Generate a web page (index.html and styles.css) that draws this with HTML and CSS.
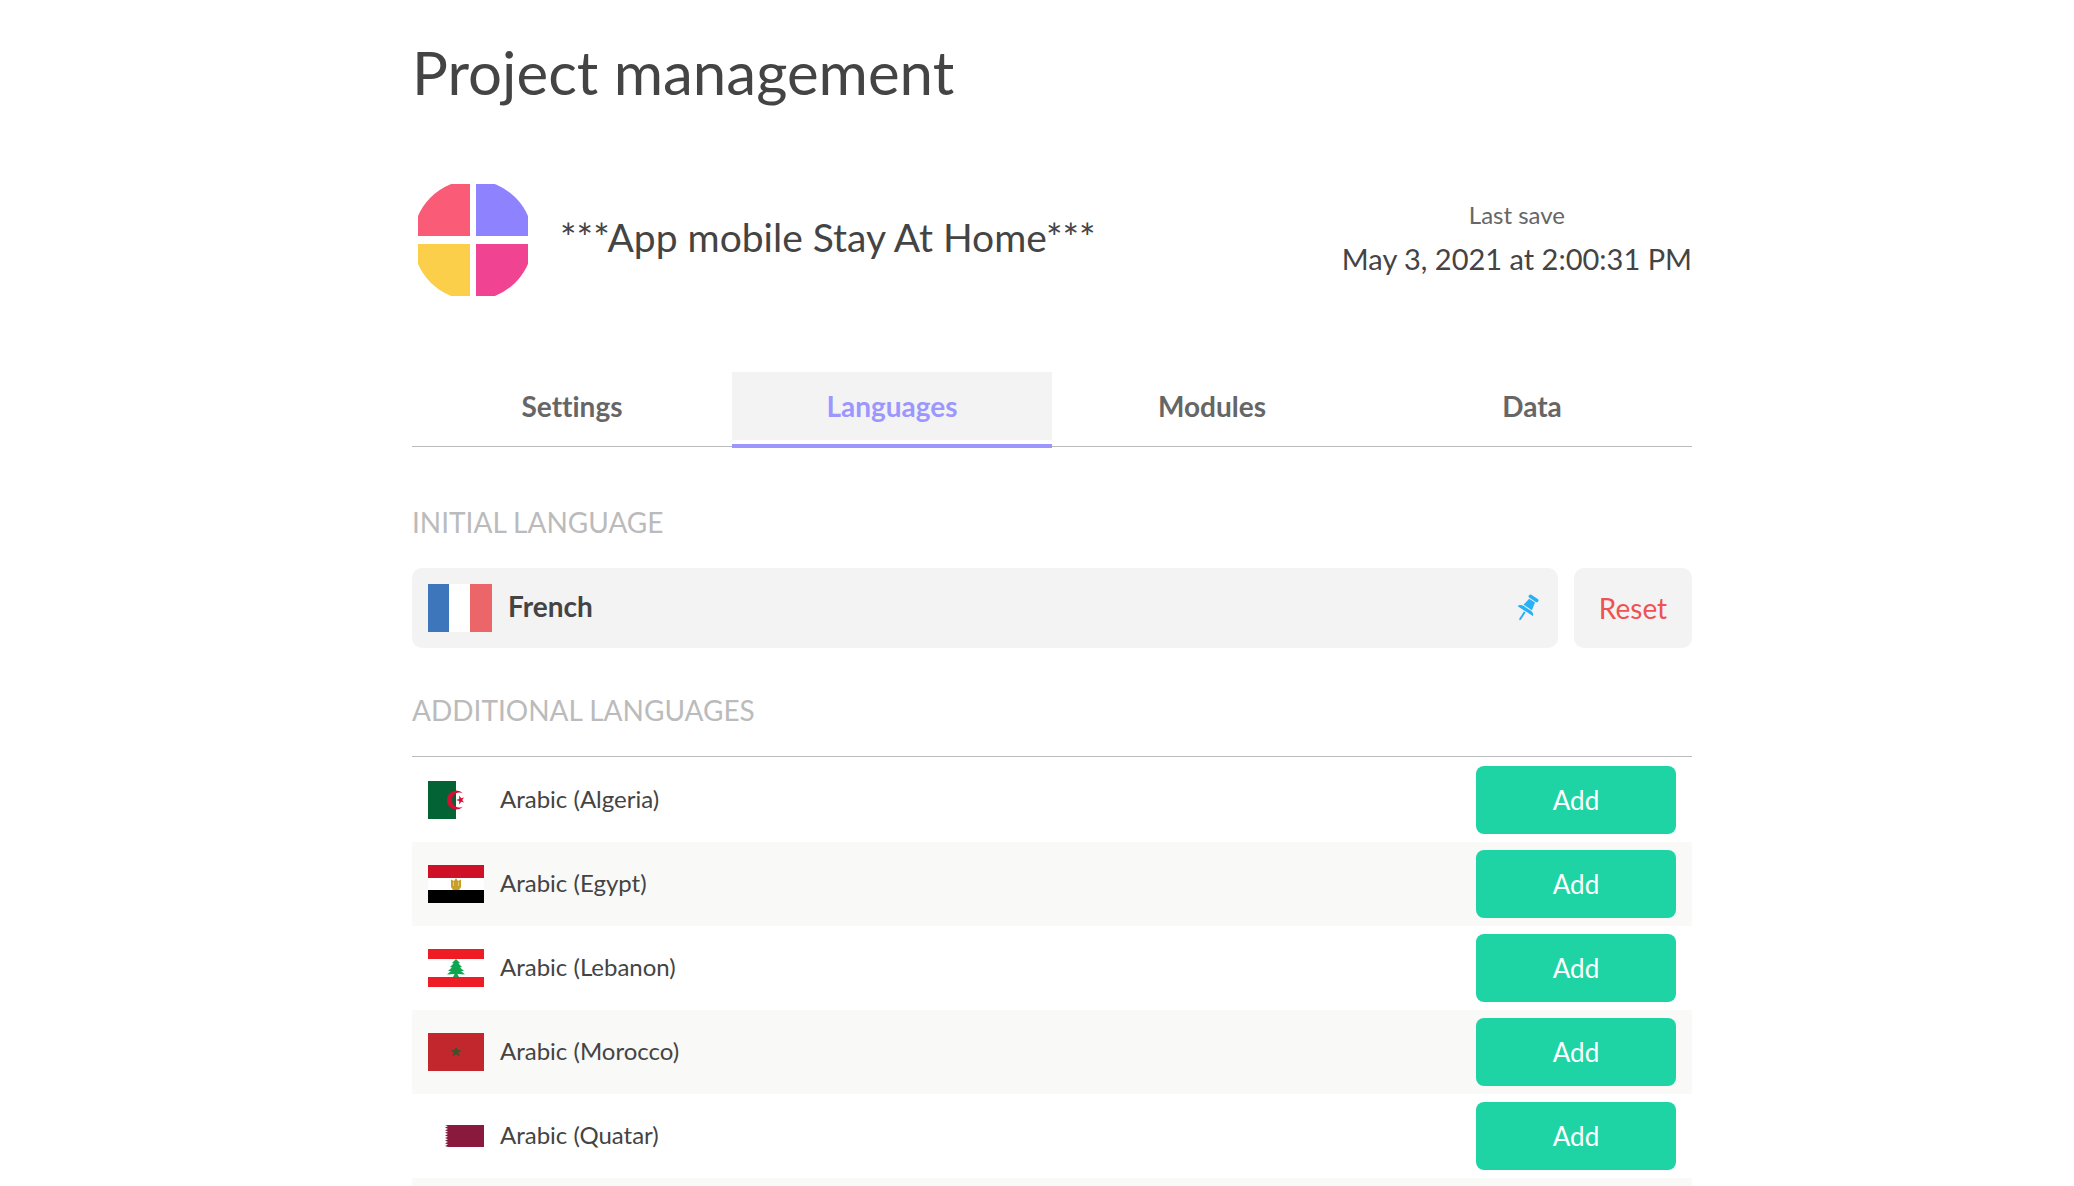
FILE: index.html
```
<!DOCTYPE html>
<html lang="en">

<head>
    <meta charset="UTF-8">
    <meta name="viewport" content="width=device-width, initial-scale=1.0">
    <title>Project management</title>
    <link rel="stylesheet" href="styles.css">
</head>

<body>
    <main class="container">
        <h1>Project management</h1>

        <header class="project">
            <svg class="logo" viewBox="0 0 120 120" aria-hidden="true">
                <clipPath id="round">
                    <circle cx="61" cy="60" r="60" />
                </clipPath>
                <g clip-path="url(#round)">
                    <rect x="6" y="4" width="52" height="52" fill="#fa5c78" />
                    <rect x="64" y="4" width="52" height="52" fill="#8f82ff" />
                    <rect x="6" y="64" width="52" height="52" fill="#fbcf4a" />
                    <rect x="64" y="64" width="52" height="52" fill="#f04392" />
                </g>
            </svg>
            <h2>***App mobile Stay At Home***</h2>
            <div class="last-save">
                <span class="label">Last save</span>
                <time datetime="2021-05-03T14:00:31">May 3, 2021 at 2:00:31 PM</time>
            </div>
        </header>

        <nav class="tabs">
            <a href="#settings">Settings</a>
            <a href="#languages" class="active">Languages</a>
            <a href="#modules">Modules</a>
            <a href="#data">Data</a>
        </nav>

        <section>
            <h3>INITIAL LANGUAGE</h3>
            <div class="initial">
                <div class="current">
                    <svg class="flag-large" viewBox="0 0 64 48" aria-hidden="true">
                        <rect width="64" height="48" fill="#fff" />
                        <rect width="21" height="48" fill="#3d76ba" />
                        <rect x="42" width="22" height="48" fill="#ec6569" />
                    </svg>
                    <strong>French</strong>
                    <svg class="pin" viewBox="0 0 24 28" aria-hidden="true">
                        <g transform="translate(12 13) rotate(33)" fill="#29b0f5">
                            <rect x="-5.500" y="-12" width="11" height="3.500" rx="1.700" />
                            <path d="M-3.500 -7.500H3.500L5 0.500H-5Z" />
                            <path d="M-9 5C-9 2.500 -6 1.500 -4 1.500H4C6 1.500 9 2.500 9 5Z" />
                            <path d="M-1 6H1V14L0 16L-1 14Z" />
                        </g>
                    </svg>
                </div>
                <button type="button" class="reset">Reset</button>
            </div>
        </section>

        <section>
            <h3>ADDITIONAL LANGUAGES</h3>
            <ul class="languages">
                <li>
                    <svg class="flag" viewBox="0 0 56 38" aria-hidden="true">
                        <rect x="28" width="28" height="38" fill="#fff" />
                        <rect width="28" height="38" fill="#046335" />
                        <path d="M35 12.200A9.500 9.500 0 1 0 35 25.800A7.600 7.600 0 1 1 35 12.200Z" fill="#d21034" />
                        <path d="M28 19L31.200 18L31.200 14.600L33.200 17.300L36 16.400L34.200 19L36 21.600L33.200 20.700L31.200 23.400L31.200 20Z" fill="#d21034" />
                    </svg>
                    <span>Arabic (Algeria)</span>
                    <button type="button">Add</button>
                </li>
                <li>
                    <svg class="flag" viewBox="0 0 56 38" aria-hidden="true">
                        <rect width="56" height="38" fill="#fff" />
                        <rect width="56" height="13" fill="#ce1126" />
                        <rect y="25" width="56" height="13" fill="#000" />
                        <path d="M23 14.500L26 16L28 13L30 16L33 14.500V22L31 25H25L23 22Z" fill="#c7a02c" />
                        <path d="M25.500 17V21M30.500 17V21" stroke="#e3c878" />
                    </svg>
                    <span>Arabic (Egypt)</span>
                    <button type="button">Add</button>
                </li>
                <li>
                    <svg class="flag" viewBox="0 0 56 38" aria-hidden="true">
                        <rect width="56" height="38" fill="#fff" />
                        <rect width="56" height="10" fill="#ee1c25" />
                        <rect y="28" width="56" height="10" fill="#ee1c25" />
                        <path d="M28 10L32 14L30.500 14.500L34 18L32 18.500L36 22L33 22L37 25.500L29.500 25L31 28H25L26.500 25L19 25.500L23 22L20 22L24 18.500L22 18L25.500 14.500L24 14Z" fill="#10a651" />
                    </svg>
                    <span>Arabic (Lebanon)</span>
                    <button type="button">Add</button>
                </li>
                <li>
                    <svg class="flag" viewBox="0 0 56 38" aria-hidden="true">
                        <rect width="56" height="38" fill="#c1272d" />
                        <path d="M28 13.500L29.500 17H33.500L30.300 19.400L31.500 23.500L28 21L24.500 23.500L25.700 19.400L22.500 17H26.500Z" fill="#3d5229" />
                    </svg>
                    <span>Arabic (Morocco)</span>
                    <button type="button">Add</button>
                </li>
                <li>
                    <svg class="flag" viewBox="0 0 56 38" aria-hidden="true">
                        <rect width="56" height="38" fill="#fff" />
                        <path d="M56 8H17L20 9.300L17 10.600L20 11.900L17 13.200L20 14.500L17 15.800L20 17.100L17 18.400L20 19.700L17 21L20 22.300L17 23.600L20 24.900L17 26.200L20 27.500L17 29L20 30H56Z" fill="#8a1a3d" />
                    </svg>
                    <span>Arabic (Quatar)</span>
                    <button type="button">Add</button>
                </li>
                <li></li>
            </ul>
        </section>
    </main>
</body>

</html>
```
FILE: styles.css
```
* {
    box-sizing: border-box;
}

body {
    height: 100vh;
    margin: 0;
    padding: 0 0 0 30px;
    overflow: hidden;
    font-family: Lato, sans-serif;
    font-variant-ligatures: none;
    color: #444;
    background-color: #fff;
}

.container {
    max-width: 1280px;
    margin: 0 auto;
    padding-top: 36px;
}

h1,
h2,
h3 {
    margin: 0;
    font-weight: 400;
}

h1 {
    font-size: 60px;
    line-height: 72px;
}

.project {
    display: flex;
    align-items: center;
    margin: 72px 0;
}

.logo {
    width: 120px;
    height: 120px;
    margin-right: 28px;
}

h2 {
    padding-bottom: 6px;
    font-size: 39px;
    line-height: 48px;
}

.last-save {
    display: flex;
    flex-direction: column;
    align-items: center;
    margin-left: auto;
    padding-bottom: 6px;
    font-size: 29px;
    line-height: 44px;
}

.last-save .label {
    font-size: 24px;
    color: #666;
}

.tabs {
    display: grid;
    grid-template-columns: repeat(4, 1fr);
    height: 75px;
    margin-bottom: 13px;
    border-bottom: 1px solid #bbb;
}

.tabs a {
    height: 76px;
    padding-bottom: 4px;
    border-bottom: 4px solid transparent;
    background-clip: content-box;
    font-size: 28px;
    font-weight: 700;
    line-height: 68px;
    color: #666;
    text-align: center;
    text-decoration: none;
}

.tabs .active {
    color: #9c97ff;
    border-color: #9c97ff;
    background-color: #f3f3f3;
}

h3 {
    font-size: 28px;
    line-height: 36px;
    color: #bbb;
}

section {
    padding-top: 44px;
}

.initial {
    display: flex;
    gap: 16px;
    margin-top: 28px;
}

.current {
    display: flex;
    flex: 1;
    align-items: center;
    gap: 16px;
    height: 80px;
    padding: 0 18px 0 16px;
    border-radius: 10px;
    background-color: #f3f3f3;
    font-size: 28px;
}

.current strong,
.languages span {
    padding-bottom: 4px;
}

.flag-large {
    width: 64px;
    height: 48px;
}

.pin {
    width: 24px;
    height: 28px;
    margin-left: auto;
}

button {
    border: 0;
    font-family: inherit;
    cursor: pointer;
}

.reset {
    width: 118px;
    border-radius: 10px;
    background-color: #f3f3f3;
    font-size: 28px;
    color: #ee5253;
}

.languages {
    margin: 28px 0 0;
    padding: 1px 0 0;
    border-top: 1px solid #bbb;
    list-style: none;
}

.languages li {
    display: flex;
    align-items: center;
    gap: 16px;
    height: 84px;
    padding: 0 16px;
    font-size: 24px;
}

.languages li:nth-child(even) {
    background-color: #f9f9f8;
}

.languages button {
    width: 200px;
    height: 68px;
    margin-left: auto;
    border-radius: 8px;
    background-color: #1fd4a4;
    font-size: 26px;
    color: #fff;
}

.flag {
    width: 56px;
    height: 38px;
}
```
